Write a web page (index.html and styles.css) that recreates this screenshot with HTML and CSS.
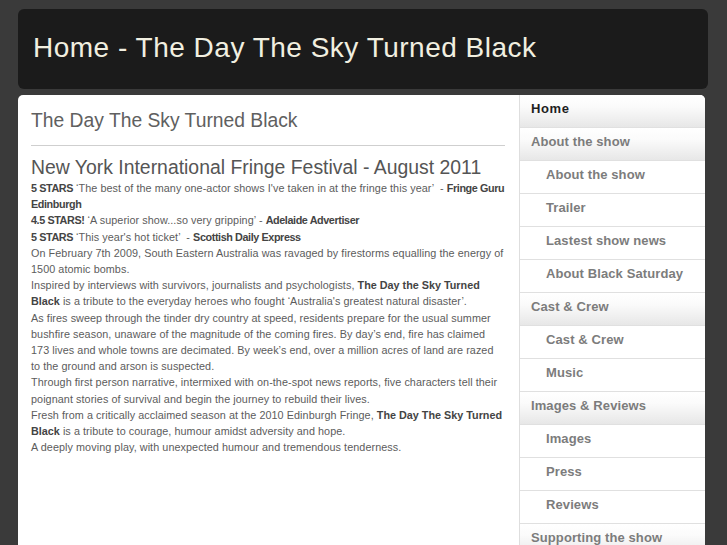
FILE: index.html
```html
<!DOCTYPE html>
<html lang="en">
<head>
<meta charset="utf-8">
<title>Home - The Day The Sky Turned Black</title>
<link rel="stylesheet" href="styles.css">
</head>
<body>
<div class="page">
  <header class="masthead">
    <h1 class="site-title">Home - The Day The Sky Turned Black</h1>
  </header>
  <div class="main">
    <div class="content">
      <h2 class="page-title">The Day The Sky Turned Black</h2>
      <hr class="rule">
      <h3 class="section-title">New York International Fringe Festival - August 2011</h3>
      <div class="text">
        <strong>5 STARS</strong> ‘The best of the many one-actor shows I've taken in at the fringe this year’ &nbsp;- <strong>Fringe Guru Edinburgh</strong><br>
        <strong>4.5 STARS!</strong> ‘A superior show...so very gripping’ - <strong>Adelaide Advertiser</strong><br>
        <strong>5 STARS</strong> ‘This year's hot ticket’ &nbsp;- <strong>Scottish Daily Express</strong><br>
        On February 7th 2009, South Eastern Australia was ravaged by firestorms equalling the energy of 1500 atomic bombs.<br>
        Inspired by interviews with survivors, journalists and psychologists, <strong class="show">The Day the Sky Turned Black</strong> is a tribute to the everyday heroes who fought ‘Australia's greatest natural disaster’.<br>
        As fires sweep through the tinder dry country at speed, residents prepare for the usual summer bushfire season, unaware of the magnitude of the coming fires. By day’s end, fire has claimed 173 lives and whole towns are decimated. By week’s end, over a million acres of land are razed to the ground and arson is suspected.<br>
        Through first person narrative, intermixed with on-the-spot news reports, five characters tell their poignant stories of survival and begin the journey to rebuild their lives.<br>
        Fresh from a critically acclaimed season at the 2010 Edinburgh Fringe, <strong class="show">The Day The Sky Turned Black</strong> is a tribute to courage, humour amidst adversity and hope.<br>
        A deeply moving play, with unexpected humour and tremendous tenderness.
      </div>
    </div>
    <nav class="sidebar">
      <ul class="menu">
        <li class="item top active"><a href="#">Home</a></li>
        <li class="item top"><a href="#">About the show</a></li>
        <li class="item sub"><a href="#">About the show</a></li>
        <li class="item sub"><a href="#">Trailer</a></li>
        <li class="item sub"><a href="#">Lastest show news</a></li>
        <li class="item sub"><a href="#">About Black Saturday</a></li>
        <li class="item top"><a href="#">Cast &amp; Crew</a></li>
        <li class="item sub"><a href="#">Cast &amp; Crew</a></li>
        <li class="item sub"><a href="#">Music</a></li>
        <li class="item top"><a href="#">Images &amp; Reviews</a></li>
        <li class="item sub"><a href="#">Images</a></li>
        <li class="item sub"><a href="#">Press</a></li>
        <li class="item sub"><a href="#">Reviews</a></li>
        <li class="item top"><a href="#">Supporting the show</a></li>
      </ul>
    </nav>
  </div>
</div>
</body>
</html>
```
FILE: styles.css
```css
html, body {
  margin: 0;
  padding: 0;
}
body {
  background: #3a3a3a;
  font-family: "Liberation Sans", Arial, Helvetica, sans-serif;
  color: #555;
  height: 545px;
  overflow: hidden;
}
.page {
  padding: 9px 19px 0 18px;
}
.masthead {
  background: #1b1b1b;
  border-radius: 6px;
  padding: 23px 15px 25px 15px;
}
.site-title {
  margin: 0;
  font-weight: normal;
  font-size: 28px;
  line-height: 32px;
  letter-spacing: 0.5px;
  color: #f1efe0;
}
.main {
  margin-top: 6px;
  margin-right: 3px;
  background: #fff;
  border-radius: 5px 5px 0 0;
  overflow: hidden;
  display: flex;
  min-height: 470px;
}
.content {
  width: 474px;
  padding: 15px 14px 0 13px;
}
.page-title {
  margin: 0 0 13px 0;
  font-weight: normal;
  font-size: 19.3px;
  line-height: 22px;
  color: #606060;
}
.rule {
  margin: 0;
  border: 0;
  border-top: 1px solid #cfcfcf;
  height: 0;
}
.section-title {
  margin: 10px 0 2px 0;
  font-weight: normal;
  font-size: 19.4px;
  line-height: 22px;
  color: #555;
}
.text {
  font-size: 10.8px;
  line-height: 16.2px;
  letter-spacing: 0.07px;
  color: #5c5c5c;
}
.text strong {
  color: #444;
  letter-spacing: -0.4px;
}
.text strong.show {
  letter-spacing: 0;
}
.sidebar {
  flex: 1;
  border-left: 1px solid #dedede;
}
.menu {
  list-style: none;
  margin: 0;
  padding: 0;
}
.item {
  border-bottom: 1px solid #e0e0e0;
}
.item a {
  display: block;
  height: 16px;
  padding: 6px 11px 10px 11px;
  font-size: 13px;
  font-weight: bold;
  line-height: 16px;
  color: #7c7c7c;
  text-decoration: none;
  letter-spacing: 0.1px;
}
.item.top {
  background: linear-gradient(to bottom, #ffffff 0%, #fbfbfb 35%, #e7e7e7 100%);
}
.item.sub a {
  padding-left: 26px;
}
.item.active a {
  color: #1e1e1e;
  letter-spacing: 0.6px;
}
```
